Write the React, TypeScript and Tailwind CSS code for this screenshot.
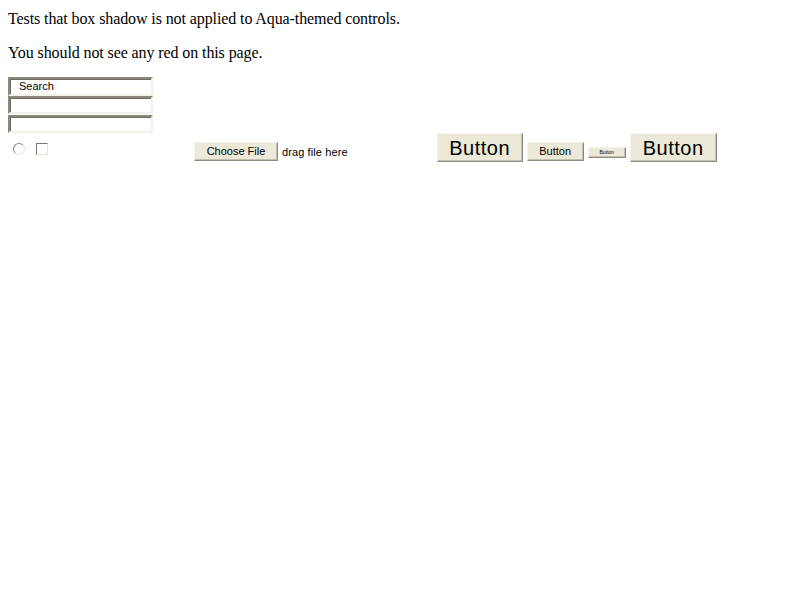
export default function App() {
  const btn =
    "bg-[#ece9d8] border border-t-[#f4f3ee] border-l-[#f4f3ee] border-r-[#8d8b80] border-b-[#8d8b80] shadow-[inset_-1px_-1px_0_#c3c0b2] flex items-center justify-center text-black";
  const inp =
    "w-[145px] bg-white border-2 border-t-[#8a887a] border-l-[#8a887a] border-r-[#f3f2ea] border-b-[#f3f2ea] shadow-[inset_1px_1px_0_#6e6c60]";
  return (
    <div className="min-h-[600px] bg-white p-2 text-black">
      <p className="m-0 mt-[2px] mb-4 text-[16px] leading-[18px] tracking-[-0.1px] font-['Liberation_Serif',serif]">
        Tests that box shadow is not applied to Aqua-themed controls.
      </p>
      <p className="m-0 mb-[15px] text-[16px] leading-[18px] tracking-[-0.1px] font-['Liberation_Serif',serif]">
        You should not see any red on this page.
      </p>
      <div className="flex flex-col font-['Liberation_Sans',Arial,sans-serif]">
        <div className={`${inp} h-[19px] flex items-center pl-[9px] text-[11px]`}>Search</div>
        <div className={`${inp} h-[18px]`} />
        <div className={`${inp} h-[18px] mt-[1px]`} />
      </div>
      <div className="flex items-start font-['Liberation_Sans',Arial,sans-serif]">
        <div className="ml-[5px] mt-[10px] w-[12px] h-[12px] rounded-full border border-t-[#8a887a] border-l-[#8a887a] border-r-[#e8e6dc] border-b-[#e8e6dc] bg-white" />
        <div className="ml-[11px] mt-[10px] w-[12px] h-[12px] border border-t-[#7a786c] border-l-[#7a786c] border-r-[#e4e2d8] border-b-[#e4e2d8] bg-white" />
        <div className={`${btn} ml-[146px] mt-[9px] w-[84px] h-[19px] text-[11px]`}>Choose File</div>
        <div className="ml-[4px] mt-[13px] text-[11px] leading-[13px] tracking-[0.1px]">drag file here</div>
        <div className={`${btn} ml-[89px] mt-0 w-[86px] h-[29px] text-[20px] tracking-[0.5px]`}>Button</div>
        <div className={`${btn} ml-[4px] mt-[9px] w-[57px] h-[19px] text-[11px]`}>Button</div>
        <div className={`${btn} ml-[4px] mt-[14px] w-[38px] h-[11px] text-[5px]`}>Button</div>
        <div className={`${btn} ml-[4px] mt-0 w-[87px] h-[29px] text-[20px] tracking-[0.5px]`}>Button</div>
      </div>
    </div>
  );
}
